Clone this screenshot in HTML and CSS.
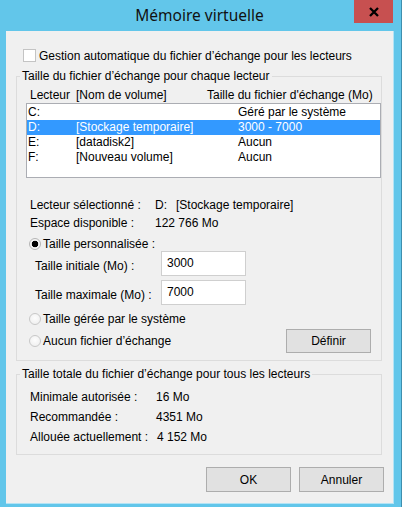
FILE: index.html
```html
<!DOCTYPE html>
<html lang="fr">
<head>
<meta charset="utf-8">
<title>Mémoire virtuelle</title>
<link rel="stylesheet" href="styles.css">
</head>
<body>
<div class="window">
  <div class="titlebar">
    <span class="spacer"></span>
    <div class="title">Mémoire virtuelle</div>
    <div class="close"><svg width="10" height="10" viewBox="0 0 10 10"><path d="M1 1L9 9M9 1L1 9" stroke="#000" stroke-width="2.3" fill="none"/></svg></div>
  </div>
  <div class="content">
    <div class="check-row"><span class="checkbox"></span><span>Gestion automatique du fichier d’échange pour les lecteurs</span></div>

    <fieldset class="group">
      <legend>Taille du fichier d’échange pour chaque lecteur</legend>
      <div class="list-head"><span>Lecteur</span><span>[Nom de volume]</span><span>Taille du fichier d'échange (Mo)</span></div>
      <div class="list">
        <div class="row"><span>C:</span><span></span><span>Géré par le système</span></div>
        <div class="row selected"><span>D:</span><span>[Stockage temporaire]</span><span>3000 - 7000</span></div>
        <div class="row"><span>E:</span><span>[datadisk2]</span><span>Aucun</span></div>
        <div class="row"><span>F:</span><span>[Nouveau volume]</span><span>Aucun</span></div>
      </div>
      <div class="info">
        <div class="info-row"><span class="k">Lecteur sélectionné :</span><span class="drv">D:</span><span>[Stockage temporaire]</span></div>
        <div class="info-row"><span class="k">Espace disponible :</span><span>122 766 Mo</span></div>
      </div>
      <div class="radio-row first"><span class="radio checked"></span><span>Taille personnalisée :</span></div>
      <div class="field-row"><span class="fl">Taille initiale (Mo) :</span><span class="input">3000</span></div>
      <div class="field-row second"><span class="fl">Taille maximale (Mo) :</span><span class="input">7000</span></div>
      <div class="radio-row sys"><span class="radio"></span><span>Taille gérée par le système</span></div>
      <div class="radio-row none">
        <div class="radio-label"><span class="radio"></span><span>Aucun fichier d’échange</span></div>
        <span class="btn set">Définir</span>
      </div>
    </fieldset>

    <fieldset class="group total">
      <legend>Taille totale du fichier d’échange pour tous les lecteurs</legend>
      <div class="totals">
        <div class="t-row"><span class="tk">Minimale autorisée :</span><span>16 Mo</span></div>
        <div class="t-row"><span class="tk">Recommandée :</span><span>4351 Mo</span></div>
        <div class="t-row"><span class="tk">Allouée actuellement :</span><span class="tv-last">4 152 Mo</span></div>
      </div>
    </fieldset>

    <div class="actions">
      <span class="btn">OK</span>
      <span class="btn">Annuler</span>
    </div>
  </div>
</div>
</body>
</html>
```
FILE: styles.css
```css
* { box-sizing: border-box; }
html, body { margin: 0; padding: 0; }
body {
  width: 402px;
  height: 507px;
  overflow: hidden;
  background: #62c6ea;
  font-family: "Liberation Sans", Arial, sans-serif;
  font-size: 12px;
  color: #000;
}
.window {
  width: 402px;
  height: 507px;
  background: #62c6ea;
  padding: 0 7px 3px 6px;
  border-right: 1px solid #3f8fae;
  display: flex;
  flex-direction: column;
}
.titlebar {
  height: 31px;
  flex: none;
  display: grid;
  grid-template-columns: 1fr auto 1fr;
  width: 388px;
}
.title {
  font-family: "Noto Sans", "Open Sans", sans-serif;
  font-size: 15.5px;
  line-height: 31px;
  color: #111;
  padding-right: 1px;
}
.close {
  justify-self: end;
  align-self: start;
  width: 39px;
  height: 23px;
  margin-right: 1px;
  background: #c75050;
  display: flex;
  align-items: center;
  justify-content: center;
}
.close svg { display: block; }
.content {
  flex: 1;
  width: 388px;
  background: #f0f0f0;
  border-right: 1px solid #b3e3f5;
  border-bottom: 1px solid #b3e3f5;
  display: flex;
  flex-direction: column;
}
.check-row {
  display: flex;
  align-items: center;
  height: 13px;
  margin: 18px 0 0 17px;
}
.checkbox {
  width: 13px;
  height: 13px;
  background: #fff;
  border: 1px solid #c4c4c4;
  margin-right: 3px;
}
.group {
  margin: 7px 11px 0 10px;
  padding: 0 0 7px 0;
  border: 1px solid #dcdcdc;
  min-width: 0;
}
.group legend {
  margin-left: 3px;
  padding: 0 2px;
  line-height: 14px;
  height: 14px;
}
.list-head {
  display: grid;
  grid-template-columns: 46px 131px auto;
  line-height: 15px;
  margin-top: 5px;
  padding-left: 13px;
}
.list {
  margin-left: 9px;
  width: 355px;
  height: 75px;
  background: #fff;
  border: 1px solid #abadb3;
  padding-top: 1px;
}
.row {
  display: grid;
  grid-template-columns: 48px 162px auto;
  height: 15px;
  line-height: 15px;
  padding-left: 1px;
}
.row.selected {
  background: #3399ff;
  color: #fff;
}
.info { margin-top: 18px; padding-left: 13px; }
.info-row { display: flex; height: 18px; line-height: 18px; }
.info-row .k { width: 125px; }
.info-row .drv { width: 21px; }
.radio-row {
  display: flex;
  align-items: center;
  height: 14px;
  margin-left: 12px;
}
.radio-row.first { margin-top: 5px; }
.radio-row.sys { margin-top: 7px; }
.radio-row.none {
  margin-top: 3px;
  height: 24px;
  justify-content: space-between;
  margin-right: 10px;
}
.radio-label { display: flex; align-items: center; }
.radio {
  width: 12px;
  height: 12px;
  border-radius: 50%;
  border: 1px solid #c8c8c8;
  background: radial-gradient(circle at 50% 40%, #fdfdfd 0%, #ececec 100%);
  margin-right: 2px;
  flex: none;
}
.radio.checked {
  border-color: #b5b5b5;
  background: radial-gradient(circle, #000 0, #000 3px, #f4f4f4 3.6px, #f4f4f4 100%);
}
.field-row {
  display: flex;
  align-items: center;
  height: 25px;
  padding-left: 18px;
}
.field-row.second { margin-top: 4px; }
.fl { width: 126px; padding-top: 4px; }
.input {
  width: 85px;
  height: 25px;
  background: #fff;
  border: 1px solid #cfcfcf;
  padding-left: 5px;
  line-height: 23px;
}
.btn {
  width: 85px;
  height: 25px;
  background: #e1e1e1;
  border: 1px solid #adadad;
  display: flex;
  align-items: center;
  justify-content: center;
}
.btn.set { height: 24px; }
.group.total { margin-top: 6px; }
.totals { padding: 6px 0 0 13px; }
.t-row { display: flex; height: 20px; line-height: 20px; }
.tk { width: 126px; }
.tv-last { margin-left: 1px; }
.actions {
  display: flex;
  justify-content: flex-end;
  gap: 8px;
  margin-top: 12px;
  padding-right: 9px;
}
```
